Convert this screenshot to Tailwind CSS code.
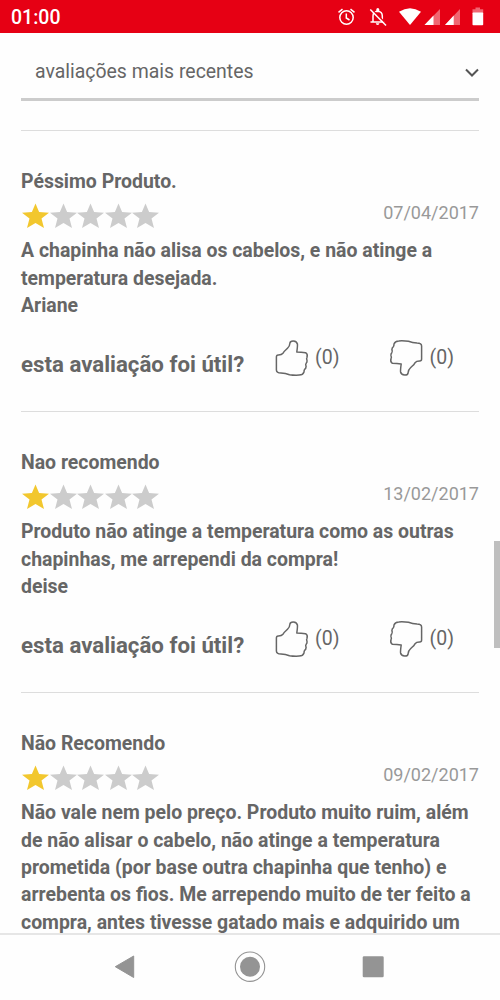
<!DOCTYPE html>
<html lang="pt-BR">
<head>
<meta charset="utf-8">
<title>Avaliações</title>
<script src="https://cdn.jsdelivr.net/npm/@tailwindcss/browser@4"></script>
</head>
<body class="bg-white">
<svg class="hidden">
  <symbol id="star" viewBox="0 0 27 26"><path d="M13.5 0.6L17.1 9L27 9.7L19.5 15.6L22 25L13.500 20.1L5 25L7.500 15.6L0 9.7L9.900 9Z"/></symbol>
  <symbol id="thumb" viewBox="0 0 40 42"><path fill="none" stroke="#666" stroke-width="1.5" stroke-linejoin="round" stroke-linecap="round" d="M4.4 20Q4.4 18 6.2 17.9Q9.5 18 11 16.2C12.3 13.8 14 12.8 15.5 11.3C17.5 9.5 17.8 8.4 17.9 6.2Q18.2 3.9 21.3 4Q24.8 4.3 25.4 7Q25.7 8.6 24.8 15Q29 15.4 33.6 15.7Q36 17 35 20.3Q34.2 21.6 35 23.3Q35.3 25 34.2 26.2Q33.2 27.4 34.1 29.4Q34 31.6 32.6 32.4Q32 33.3 32 35Q31 38 27.2 38.1Q22 38.4 17.5 37.7Q13.5 36.2 9 36Q4.5 36 4.4 33Z"/></symbol>
</svg>
<div class="w-[500px] h-[1000px] flex flex-col overflow-hidden bg-[#fefefe] font-['Roboto',sans-serif] text-[#666]">
  <header class="h-[33px] shrink-0 bg-[#e60014] text-white flex items-center justify-between pl-[11px] pr-[16px]">
    <span class="text-[19.5px] leading-[33px] font-medium pt-[2px]">01:00</span>
    <svg class="w-[150px] h-[33px]" viewBox="334 0 150 33" fill="none" stroke="#fff" stroke-width="1.5">
      <circle cx="346.500" cy="17.500" r="6.700"/><path d="M346.300 13.500V18L349.500 20M338.500 12.300L342.500 9.200M354.500 12.300L350.500 9.200"/>
      <path d="M373 21.800V16Q373 11.500 377.500 11.300Q382.300 11.500 382.300 16V21.800M370.500 22H385"/><path fill="#fff" stroke="none" d="M376.300 11V9.500a1.500 1.500 0 0 1 3 0V11ZM375.800 23.300h3.600a1.800 1.800 0 0 1-3.600 0Z"/><path stroke="#e60014" stroke-width="1.500" d="M371.500 9L387.500 25"/><path d="M370.300 9.500L386 25.500"/>
      <g stroke="none" fill="#fff"><path d="M399 11.800Q410 4.500 421 11.800L410 25Z"/>
      <path opacity=".4" d="M440 9V25H424.500ZM460 9V25H445Z"/><path d="M433.500 15.500V25H424.500ZM453.700 15.500V25H445Z"/>
      <path opacity=".4" d="M475.500 7.500H480V9.300H483.200V13H472.500V9.300H475.500Z"/><rect x="472.500" y="12.500" width="10.700" height="12.700" rx=".8"/></g>
    </svg>
  </header>
  <main class="flex-1 min-h-0 overflow-hidden pl-[21px] pr-[21px]">
    <div class="h-[68px] border-b-[3px] border-[#ccc] flex items-center justify-between pl-[14px] pt-[11px]">
      <span class="text-[19.44px] leading-[27px]">avaliações mais recentes</span>
      <svg class="w-[14px] h-[10px] mt-[3px]" viewBox="0 0 14 10" fill="none" stroke="#555" stroke-width="2"><path d="M1 1.500L7 7.500L13 1.500"/></svg>
    </div>
    <div class="h-[29px]"></div>
    <section id="reviews" class="text-[19.46px] leading-[27.35px] font-bold"></section>
  </main>
  <nav class="h-[67px] shrink-0 border-t-2 border-[#e6e6e6] bg-[#fefefe]">
    <svg class="w-[500px] h-[65px]" viewBox="0 935 500 65" fill="#949494"><path stroke="#949494" stroke-linejoin="round" d="M115.300 966.700L133.700 956V977.500Z"/><circle cx="250" cy="966.700" r="10"/><circle cx="250" cy="966.700" r="14.700" fill="none" stroke="#949494" stroke-width="1.100"/><rect x="362.700" y="956.300" width="21" height="21" rx="1.300"/></svg>
  </nav>
</div>
<div class="absolute left-[494px] top-[541px] w-[6px] h-[107px] bg-[#bfbfbf]"></div>
<template id="tpl">
  <article class="h-[281px] border-t border-[#ddd] pt-[37px]">
    <h3 data-t class="w-max"></h3>
    <div class="flex justify-between items-start h-[42px] pt-[8px]">
      <div class="flex gap-[0.6px] pl-[1px]">
        <svg class="w-[27px] h-[26px] fill-[#f2c72e]"><use href="#star"/></svg>
        <svg class="w-[27px] h-[26px] fill-[#ccc]"><use href="#star"/></svg>
        <svg class="w-[27px] h-[26px] fill-[#ccc]"><use href="#star"/></svg>
        <svg class="w-[27px] h-[26px] fill-[#ccc]"><use href="#star"/></svg>
        <svg class="w-[27px] h-[26px] fill-[#ccc]"><use href="#star"/></svg>
      </div>
      <time data-d class="text-[18px] leading-[20px] font-normal text-[#999]"></time>
    </div>
    <div data-b class="w-max"></div>
    <div data-h class="flex h-[42px] mt-[18px]">
      <span class="w-[251px] text-[22.25px] leading-[54px] whitespace-nowrap">esta avaliação foi útil?</span>
      <svg class="w-[40px] h-[42px]"><use href="#thumb"/></svg>
      <span class="w-[71px] pl-[3px] text-[19.5px] leading-[42px] font-normal">(0)</span>
      <svg class="w-[40px] h-[42px] ml-[3px] rotate-180"><use href="#thumb"/></svg>
      <span class="pl-[3.5px] text-[19.5px] leading-[42px] font-normal">(0)</span>
    </div>
  </article>
</template>
<script>
const reviews = [
  ["Péssimo Produto.", "07/04/2017", ["A chapinha não alisa os cabelos, e não atinge a", "temperatura desejada.", "Ariane"]],
  ["Nao recomendo", "13/02/2017", ["Produto não atinge a temperatura como as outras", "chapinhas, me arrependi da compra!", "deise"]],
  ["Não Recomendo", "09/02/2017", ["Não vale nem pelo preço. Produto muito ruim, além", "de não alisar o cabelo, não atinge a temperatura", "prometida (por base outra chapinha que tenho) e", "arrebenta os fios. Me arrependo muito de ter feito a", "compra, antes tivesse gatado mais e adquirido um"]]
];
for (const [title, date, lines] of reviews) {
  const n = document.getElementById("tpl").content.cloneNode(true);
  n.querySelector("[data-t]").textContent = title;
  n.querySelector("[data-d]").textContent = date;
  for (const l of lines) {
    const p = document.createElement("p");
    p.textContent = l;
    n.querySelector("[data-b]").append(p);
  }
  if (lines.length > 3) n.querySelector("[data-h]").remove();
  document.getElementById("reviews").append(n);
}
</script>
</body>
</html>
